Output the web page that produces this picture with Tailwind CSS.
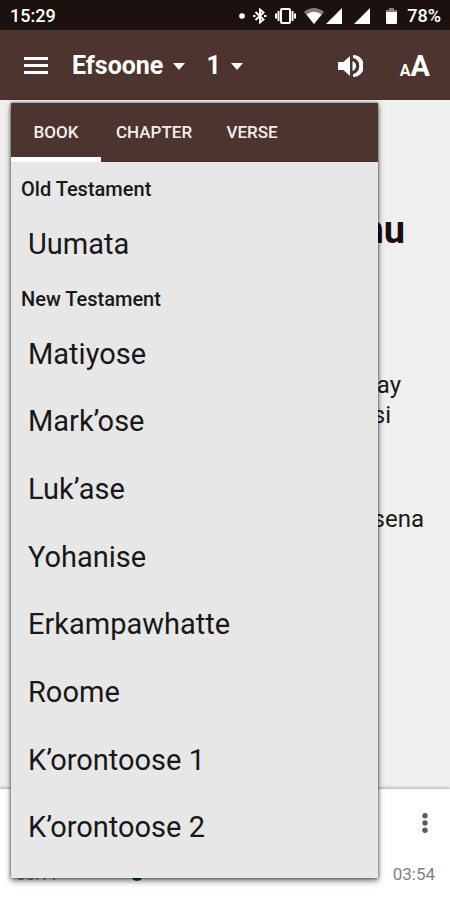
<!DOCTYPE html>
<html lang="wal">
<head>
<meta charset="utf-8">
<meta name="viewport" content="width=device-width, initial-scale=1">
<title>Efsoone 1</title>
<script src="https://cdn.jsdelivr.net/npm/@tailwindcss/browser@4"></script>
</head>
<body class="relative flex min-h-screen flex-col bg-[#efefef] font-['Roboto',sans-serif] text-[#181818]">

<!-- System status bar -->
<div class="flex h-[30px] items-center bg-[#1c110f] pl-[10px] pr-[9px] pt-[2px] text-lg font-medium text-white">
  <span class="flex-1">15:29</span>
  <div class="flex items-center" aria-hidden="true">
    <svg class="mr-2 size-[6px]" viewBox="0 0 6 6" fill="#fff"><circle cx="3" cy="3" r="2.8"/></svg>
    <svg class="mr-2 h-4 w-[14px]" viewBox="0 0 14 16" fill="none" stroke="#fff" stroke-width="1.9"><path d="M2.500 4 10.500 11.500 7 14.500V1.500L10.500 4.500 2.500 12"/><path d="M0 8h2.500M11 8h2.500"/></svg>
    <svg class="mr-2 h-4 w-[21px]" viewBox="0 0 21 16" fill="none" stroke="#fff" stroke-width="2"><rect x="6" y="1" width="9" height="14" rx="1"/><path d="M3.500 3v10M17.500 3v10M1 5.500v5M20 5.500v5"/></svg>
    <svg class="mr-[2px] h-4 w-5" viewBox="0 0 20 16"><path d="M0 4Q10-4 20 4L10 16Z" fill="#857c7a"/><path d="M2.500 6.500Q10 1 17.500 6.500L10 16Z" fill="#fff"/></svg>
    <svg class="mr-3 size-4" viewBox="0 0 16 16" fill="#fff"><path d="M0 16 16 0V16Z"/></svg>
    <svg class="mr-4 size-4" viewBox="0 0 16 16" fill="#fff"><path d="M0 16 16 0V16Z"/></svg>
    <svg class="mr-[10px] h-4 w-[11px]" viewBox="0 0 11 16"><path d="M3 0h5v2h3v3H0V2h3Z" fill="#8b8280"/><path d="M0 4h11v11q0 1-1 1H1q-1 0-1-1Z" fill="#fff"/></svg>
  </div>
  <span>78%</span>
</div>

<!-- App bar -->
<header class="flex h-[70px] items-center bg-[#4e342e] pl-6 pr-5 pt-[2px] text-white">
  <button type="button" aria-label="Menu" class="mr-6">
    <svg class="h-[18px] w-6" viewBox="0 0 24 18" fill="#fff"><path d="M0 0h24v3H0zM0 7h24v3H0zM0 14h24v3H0z"/></svg>
  </button>
  <button type="button" class="mr-[21px] flex items-center gap-[10px] text-[25px] font-bold">Efsoone
    <svg class="h-[7px] w-3" viewBox="0 0 12 7" fill="#fff"><path d="M0 0h12L6 7z"/></svg>
  </button>
  <button type="button" class="flex items-center gap-[10px] text-[25px] font-bold">1
    <svg class="h-[7px] w-3" viewBox="0 0 12 7" fill="#fff"><path d="M0 0h12L6 7z"/></svg>
  </button>
  <div class="flex-1"></div>
  <button type="button" aria-label="Audio" class="mr-[37px]">
    <svg class="h-[22px] w-[25px]" viewBox="0 0 25 22" fill="#fff"><path d="M0 7v8h5.500L12 21V1L5.500 7z"/><path d="M14.500 6v10q3.500-1.500 3.500-5t-3.500-5z"/><path d="M15 0v2.800a8.500 8.500 0 0 1 0 16.400V22a11 11 0 0 0 0-22z"/></svg>
  </button>
  <button type="button" aria-label="Text size" class="flex items-baseline font-bold leading-none"><span class="text-base leading-none">A</span><span class="text-[29px] leading-none">A</span></button>
</header>

<!-- Chapter text behind the book selector -->
<main class="flex-1 pt-[104px] text-right">
  <h1 class="pr-[45px] text-[38px] font-bold leading-[52px] text-[#1c0c0c]">nu</h1>
  <p class="pr-[49px] pt-[114px] text-2xl leading-[30px]">ay</p>
  <p class="pr-[59px] text-2xl leading-[30px]">si</p>
  <p class="pr-[26px] pt-[74px] text-2xl leading-[30px]">sena</p>
</main>

<!-- Audio player -->
<footer class="flex h-[111px] flex-col bg-white pl-4 pr-[15px] shadow-[0_-1px_3px_rgba(0,0,0,0.3)]">
  <div class="flex h-[68px] items-center justify-end">
    <button type="button" aria-label="More options" class="pr-[7px]">
      <svg class="h-5 w-[6px]" viewBox="0 0 6 20" fill="#5c5c5c"><circle cx="3" cy="2.700" r="2.700"/><circle cx="3" cy="10" r="2.700"/><circle cx="3" cy="17.300" r="2.700"/></svg>
    </button>
  </div>
  <div class="flex h-[36px] items-center text-[17px] text-[#808080]">
    <span>00:11</span>
    <span class="ml-[73px] size-3 rounded-full bg-[#004d40]"></span>
    <span class="flex-1"></span>
    <span>03:54</span>
  </div>
</footer>

<!-- Book selector -->
<section class="absolute bottom-[22px] left-[11px] right-[72px] top-[103px] flex flex-col bg-[#e7e7e7] shadow-[0_3px_6px_rgba(0,0,0,0.5),0_0_3px_rgba(0,0,0,0.6)]">
  <div role="tablist" class="flex h-[59px] bg-[#4e342e] text-[17px] font-medium text-[#f3eeee]">
    <button type="button" role="tab" aria-selected="true" class="min-w-[90px] border-b-5 border-white px-4 pt-[5px]">BOOK</button>
    <button type="button" role="tab" aria-selected="false" class="min-w-[90px] px-[15px]">CHAPTER</button>
    <button type="button" role="tab" aria-selected="false" class="min-w-[90px] px-4">VERSE</button>
  </div>
  <div class="flex flex-1 flex-col pb-[17px] pt-[6px]">
    <h2 class="flex h-[42px] items-center pl-[10px] text-xl font-medium">Old Testament</h2>
    <button type="button" class="flex flex-1 items-center pl-[17px] text-[29px] leading-8">Uumata</button>
    <h2 class="flex h-[42px] items-center pl-[10px] text-xl font-medium">New Testament</h2>
    <button type="button" class="flex flex-1 items-center pl-[17px] text-[29px] leading-8">Matiyose</button>
    <button type="button" class="flex flex-1 items-center pl-[17px] text-[29px] leading-8">Mark’ose</button>
    <button type="button" class="flex flex-1 items-center pl-[17px] text-[29px] leading-8">Luk’ase</button>
    <button type="button" class="flex flex-1 items-center pl-[17px] text-[29px] leading-8">Yohanise</button>
    <button type="button" class="flex flex-1 items-center pl-[17px] text-[29px] leading-8">Erkampawhatte</button>
    <button type="button" class="flex flex-1 items-center pl-[17px] text-[29px] leading-8">Roome</button>
    <button type="button" class="flex flex-1 items-center pl-[17px] text-[29px] leading-8">K’orontoose 1</button>
    <button type="button" class="flex flex-1 items-center pl-[17px] text-[29px] leading-8">K’orontoose 2</button>
  </div>
</section>

</body>
</html>
